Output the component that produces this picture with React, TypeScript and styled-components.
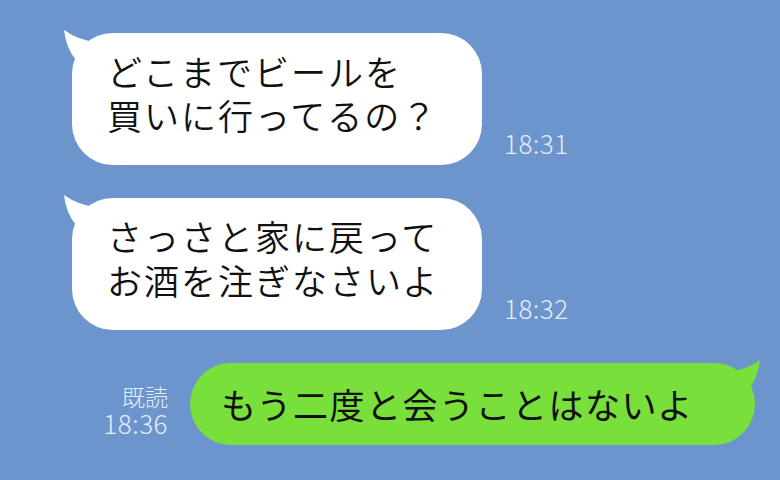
import React from 'react';
import styled, { createGlobalStyle } from 'styled-components';

const GlobalStyle = createGlobalStyle`
	html, body {
		margin: 0;
		padding: 0;
		background: #6c95cd;
	}

	body {
		font-family: 'Noto Sans CJK JP', 'Noto Sans', sans-serif;
	}
`;

type Message = {
	id: number;
	lines: string[];
	time: string;
	mine?: boolean;
	read?: boolean;
};

const messages: Message[] = [
	{ id: 1, lines: ['どこまでビールを', '買いに行ってるの？'], time: '18:31' },
	{ id: 2, lines: ['さっさと家に戻って', 'お酒を注ぎなさいよ'], time: '18:32' },
	{ id: 3, lines: ['もう二度と会うことはないよ'], time: '18:36', mine: true, read: true },
];

function Tail({ mine }: { mine?: boolean }) {
	return (
		<TailSvg $mine={mine} viewBox='0 0 36 36' width='36' height='36'>
			<path d='M2 2 Q4 20 14 32 L34 14 Q16 12 2 2 Z' fill='currentColor' />
		</TailSvg>
	);
}

function BubbleText({ lines, mine }: { lines: string[]; mine?: boolean }) {
	return (
		<Text $mine={mine}>
			{lines.map((line, i) => (
				<React.Fragment key={line}>
					{i > 0 && <br />}
					{line}
				</React.Fragment>
			))}
		</Text>
	);
}

export default function App() {
	return (
		<>
			<GlobalStyle />
			<ChatScreen>
				{messages.map((msg) =>
					msg.mine ? (
						<OutgoingRow key={msg.id}>
							<Meta>
								{msg.read && <ReadMark>既読</ReadMark>}
								<Time>{msg.time}</Time>
							</Meta>
							<Bubble $mine $width={565}>
								<Tail mine />
								<BubbleText lines={msg.lines} mine />
							</Bubble>
						</OutgoingRow>
					) : (
						<IncomingRow key={msg.id}>
							<Bubble $width={410}>
								<Tail />
								<BubbleText lines={msg.lines} />
							</Bubble>
							<Meta>
								<Time>{msg.time}</Time>
							</Meta>
						</IncomingRow>
					)
				)}
			</ChatScreen>
		</>
	);
}

const ChatScreen = styled.main`
	width: 780px;
	height: 480px;
	box-sizing: border-box;
	padding-top: 33px;
	background: #6c95cd;
	display: flex;
	flex-direction: column;
	gap: 33px;
	overflow: hidden;
`;

const IncomingRow = styled.div`
	display: flex;
	align-items: flex-end;
	gap: 22px;
	padding-left: 72px;
`;

const OutgoingRow = styled.div`
	display: flex;
	align-items: flex-end;
	justify-content: flex-end;
	gap: 22px;
	padding-right: 25px;
`;

const Bubble = styled.div<{ $mine?: boolean; $width: number }>`
	position: relative;
	width: ${(p) => p.$width}px;
	box-sizing: border-box;
	padding: ${(p) => (p.$mine ? '19px 0 19px 31px' : '16px 0 28px 35px')};
	border-radius: 41px;
	background: ${(p) => (p.$mine ? '#79df3b' : '#ffffff')};
	color: ${(p) => (p.$mine ? '#79df3b' : '#ffffff')};
`;

const TailSvg = styled.svg<{ $mine?: boolean }>`
	position: absolute;
	top: -5px;
	${(p) => (p.$mine ? 'right: -7px; transform: scaleX(-1);' : 'left: -10px;')}
`;

const Text = styled.p<{ $mine?: boolean }>`
	position: relative;
	margin: 0;
	font-size: 35px;
	line-height: 44px;
	letter-spacing: ${(p) => (p.$mine ? '1.5px' : '2px')};
	font-weight: ${(p) => (p.$mine ? 400 : 350)};
	color: #111;
	white-space: nowrap;
`;

const Meta = styled.div`
	display: flex;
	flex-direction: column;
	align-items: flex-end;
	padding-bottom: 7px;
	color: #e6edf8;
	font-weight: 300;
	line-height: 1.15;
`;

const ReadMark = styled.span`
	font-size: 23px;
	margin-bottom: -1px;
`;

const Time = styled.span`
	font-size: 26px;
	letter-spacing: 0.5px;
`;
